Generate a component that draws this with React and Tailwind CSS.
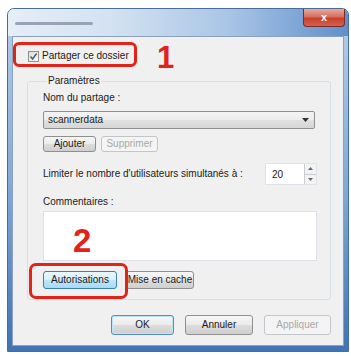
import { useState } from "react";

const font = { fontFamily: '"Liberation Sans", Arial, sans-serif' };

const Button = ({ children, className = "", disabled = false, blue = false }) => (
  <button
    disabled={disabled}
    className={
      "flex items-center justify-center rounded-[3px] border text-[10px] leading-none " +
      (disabled
        ? "border-[#c2c6ca] bg-[#f4f4f4] text-[#a8a8a8] "
        : blue
        ? "border-[#3c7fb1] bg-[linear-gradient(180deg,#eaf6fd_0%,#d9f0fc_50%,#bee6fd_51%,#a7d9f5_100%)] text-[#1a1a1a] "
        : "border-[#8e8f8f] bg-[linear-gradient(180deg,#f6f6f6_0%,#ebebeb_50%,#dddddd_51%,#cfcfcf_100%)] text-[#1a1a1a] ") +
      className
    }
  >
    {children}
  </button>
);

const CheckBox = ({ checked, onChange }) => (
  <button
    onClick={onChange}
    className="flex h-[11px] w-[11px] items-center justify-center border border-[#8f8f8f] bg-[linear-gradient(135deg,#dcdcdc,#fbfbfb)]"
  >
    {checked && (
      <svg width="9" height="9" viewBox="0 0 9 9">
        <path d="M1.5 4.5 L3.6 7 L7.6 1.5" fill="none" stroke="#4a5a6a" strokeWidth="1.4" />
      </svg>
    )}
  </button>
);

export default function App() {
  const [shared, setShared] = useState(true);
  const [limit, setLimit] = useState(20);

  return (
    <div className="relative h-[356px] w-[351px] overflow-hidden bg-white pl-[7px] pt-[8px]" style={font}>
      {/* fenêtre */}
      <div className="flex h-[344px] w-[342px] flex-col rounded-t-[7px] border border-[#4a6d96] bg-[linear-gradient(180deg,#b7cfea_0%,#7ea6d6_55%,#3f73b4_100%)]">
        <div className="flex h-[27px] items-start justify-between rounded-t-[6px] bg-[linear-gradient(90deg,#e6eef7_0%,#d4e2f1_30%,#a9c5e6_65%,#5f90cc_100%)]">
          <div className="ml-[7px] mt-[13px] h-[3px] w-[78px] rounded-full bg-[#8693a4] opacity-80 blur-[0.6px]" />
          <button className="mr-[3px] flex h-[18px] w-[42px] items-center justify-center rounded-b-[4px] border border-t-0 border-[#7a2b2b] bg-[linear-gradient(180deg,#e9a99f_0%,#d7705f_45%,#c7402c_55%,#d8604c_100%)] text-[11px] font-bold leading-none text-white">
            x
          </button>
        </div>

        <div className="mx-[4px] flex flex-1 flex-col border border-[#8ba0bb] bg-[#f0f0f0]">
          <div className="ml-[15px] mt-[13px] flex h-[12px] items-center gap-[3px]">
            <CheckBox checked={shared} onChange={() => setShared(!shared)} />
            <span className="text-[10px] leading-none text-[#1a1a1a]">Partager ce dossier</span>
          </div>

          <fieldset className="ml-[14px] mt-[13px] w-[303px] rounded-[3px] border border-[#d5dfe5] pb-[10px] pl-[15px] pr-[13px]">
            <legend className="ml-[4px] px-[1px] text-[10px] leading-[12px] text-[#1a1a1a]">Paramètres</legend>
            <div className="mt-[5px] text-[10px] leading-[12px] text-[#1a1a1a]">Nom du partage :</div>
            <div className="mt-[7px] flex h-[18px] w-[272px] items-center justify-between rounded-[2px] border border-[#8e8f8f] bg-[linear-gradient(180deg,#f4f4f4_0%,#ececec_50%,#e0e0e0_51%,#d6d6d6_100%)] pl-[4px] pr-[5px]">
              <span className="text-[10px] leading-none text-[#1a1a1a]">scannerdata</span>
              <svg width="7" height="4" viewBox="0 0 7 4">
                <path d="M0 0 H7 L3.5 4 Z" fill="#333" />
              </svg>
            </div>
            <div className="mt-[7px] flex gap-[5px]">
              <Button className="h-[16px] w-[53px]">Ajouter</Button>
              <Button disabled className="h-[16px] w-[57px]">Supprimer</Button>
            </div>
            <div className="mt-[11px] flex h-[22px] items-center justify-between">
              <span className="text-[10px] leading-none text-[#1a1a1a]">Limiter le nombre d'utilisateurs simultanés à :</span>
              <div className="flex h-[22px] w-[52px] border border-[#e2e3ea] bg-white">
                <input
                  value={limit}
                  onChange={(e) => setLimit(e.target.value)}
                  className="w-[38px] bg-white pl-[6px] text-[10px] text-[#1a1a1a] outline-none"
                />
                <div className="flex flex-1 flex-col border-l border-[#c9ccd2] bg-[#f3f3f3]">
                  <div className="flex flex-1 items-center justify-center border-b border-[#c9ccd2]">
                    <svg width="5" height="3" viewBox="0 0 5 3"><path d="M0 3 H5 L2.5 0 Z" fill="#666" /></svg>
                  </div>
                  <div className="flex flex-1 items-center justify-center">
                    <svg width="5" height="3" viewBox="0 0 5 3"><path d="M0 0 H5 L2.5 3 Z" fill="#666" /></svg>
                  </div>
                </div>
              </div>
            </div>
            <div className="mt-[11px] text-[10px] leading-[12px] text-[#1a1a1a]">Commentaires :</div>
            <textarea className="mt-[3px] block h-[50px] w-[274px] resize-none border border-[#dfe2e8] bg-white outline-none" />
            <div className="mt-[10px] flex gap-[9px]">
              <Button blue className="h-[18px] w-[74px]">Autorisations</Button>
              <Button className="h-[18px] w-[68px]">Mise en cache</Button>
            </div>
          </fieldset>

          <div className="mr-[12px] mt-[15px] flex justify-end gap-[11px]">
            <Button className="h-[20px] w-[63px] !border-[#4d8fc4] shadow-[inset_0_0_0_1px_#bfe3f7]">OK</Button>
            <Button className="h-[20px] w-[68px]">Annuler</Button>
            <Button disabled className="h-[20px] w-[67px]">Appliquer</Button>
          </div>
        </div>
        <div className="h-[5px]" />
      </div>

      {/* annotations */}
      <div className="absolute left-[13px] top-[42px] h-[25px] w-[124px] rounded-[6px] border-[3px] border-[#e2231a]" />
      <div className="absolute left-[157px] top-[42px] text-[31px] font-bold leading-none text-[#e2231a]">1</div>
      <div className="absolute left-[29px] top-[263px] h-[36px] w-[99px] rounded-[7px] border-[3px] border-[#e2231a]" />
      <div className="absolute left-[73px] top-[224px] text-[33px] font-bold leading-none text-[#e2231a]">2</div>
    </div>
  );
}
